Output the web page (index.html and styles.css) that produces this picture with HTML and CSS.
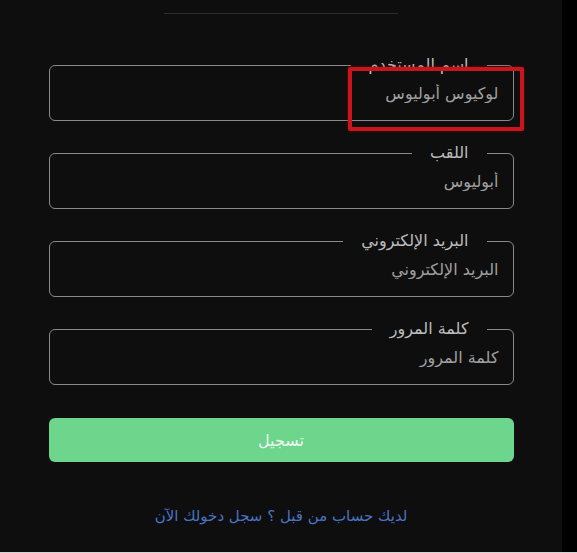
FILE: index.html
```html
<!DOCTYPE html>
<html lang="ar" dir="rtl">
<head>
<meta charset="utf-8">
<title>تسجيل</title>
<link rel="stylesheet" href="styles.css">
</head>
<body>
<div class="screen">
  <main class="page">
    <div class="top-rule"></div>
    <form class="form">
      <fieldset class="field">
        <legend class="label">اسم المستخدم</legend>
        <input class="input" type="text" placeholder="لوكيوس أبوليوس">
      </fieldset>
      <fieldset class="field">
        <legend class="label">اللقب</legend>
        <input class="input" type="text" placeholder="أبوليوس">
      </fieldset>
      <fieldset class="field">
        <legend class="label">البريد الإلكتروني</legend>
        <input class="input" type="email" placeholder="البريد الإلكتروني">
      </fieldset>
      <fieldset class="field">
        <legend class="label">كلمة المرور</legend>
        <input class="input" type="password" placeholder="كلمة المرور">
      </fieldset>
      <button class="submit" type="button">تسجيل</button>
      <a class="login-link" href="#">لديك حساب من قبل ؟ سجل دخولك الآن</a>
      <div class="highlight"></div>
    </form>
  </main>
  <div class="side-strip"></div>
</div>
<div class="bottom-line"></div>
</body>
</html>
```

FILE: styles.css
```css
* { box-sizing: border-box; }
html, body { margin: 0; padding: 0; }
body {
  background: #0e0e0e;
  font-family: "DejaVu Sans", "Noto Sans", sans-serif;
  width: 577px;
  height: 553px;
  overflow: hidden;
}
.screen {
  display: flex;
  flex-direction: row-reverse;
  height: 552px;
}
.side-strip {
  width: 15px;
  background: #000;
  flex: none;
}
.page {
  width: 562px;
  flex: none;
  background: #0e0e0e;
  display: flex;
  flex-direction: column;
  align-items: center;
  padding-top: 13px;
}
.top-rule {
  width: 234px;
  height: 1px;
  background: #2e2e2e;
}
.bottom-line {
  height: 1px;
  background: #d4d4d4;
}
.form {
  position: relative;
  width: 465px;
  margin-top: 41px;
  display: flex;
  flex-direction: column;
  gap: 22px;
}
.field {
  margin: 0;
  padding: 0 14px 9px 14px;
  border: 1px solid #8a8a8a;
  border-radius: 6px;
  min-width: 0;
}
.label {
  margin-right: 12px;
  padding: 0 18px;
  font-size: 16px;
  line-height: 20px;
  color: #bdbdbd;
}
.input {
  display: block;
  width: 100%;
  height: 36px;
  border: none;
  outline: none;
  background: transparent;
  padding: 0;
  font-family: inherit;
  font-size: 16px;
  color: #a5a5a5;
  text-align: right;
}
.input::placeholder { color: #a0a0a0; opacity: 1; }
.submit {
  margin-top: 11px;
  height: 44px;
  border: none;
  border-radius: 6px;
  background: #6dd58c;
  color: #eef8f1;
  font-family: inherit;
  font-size: 16px;
  cursor: pointer;
}
.login-link {
  margin-top: 22px;
  align-self: center;
  font-size: 15px;
  line-height: 20px;
  color: #4a74c4;
  text-decoration: none;
}
.highlight {
  position: absolute;
  top: 12px;
  left: 299px;
  width: 176px;
  height: 64px;
  border: 4px solid #c8161c;
  border-radius: 2px;
  box-shadow: 0 0 3px rgba(140, 10, 10, 0.8);
  pointer-events: none;
}
```
